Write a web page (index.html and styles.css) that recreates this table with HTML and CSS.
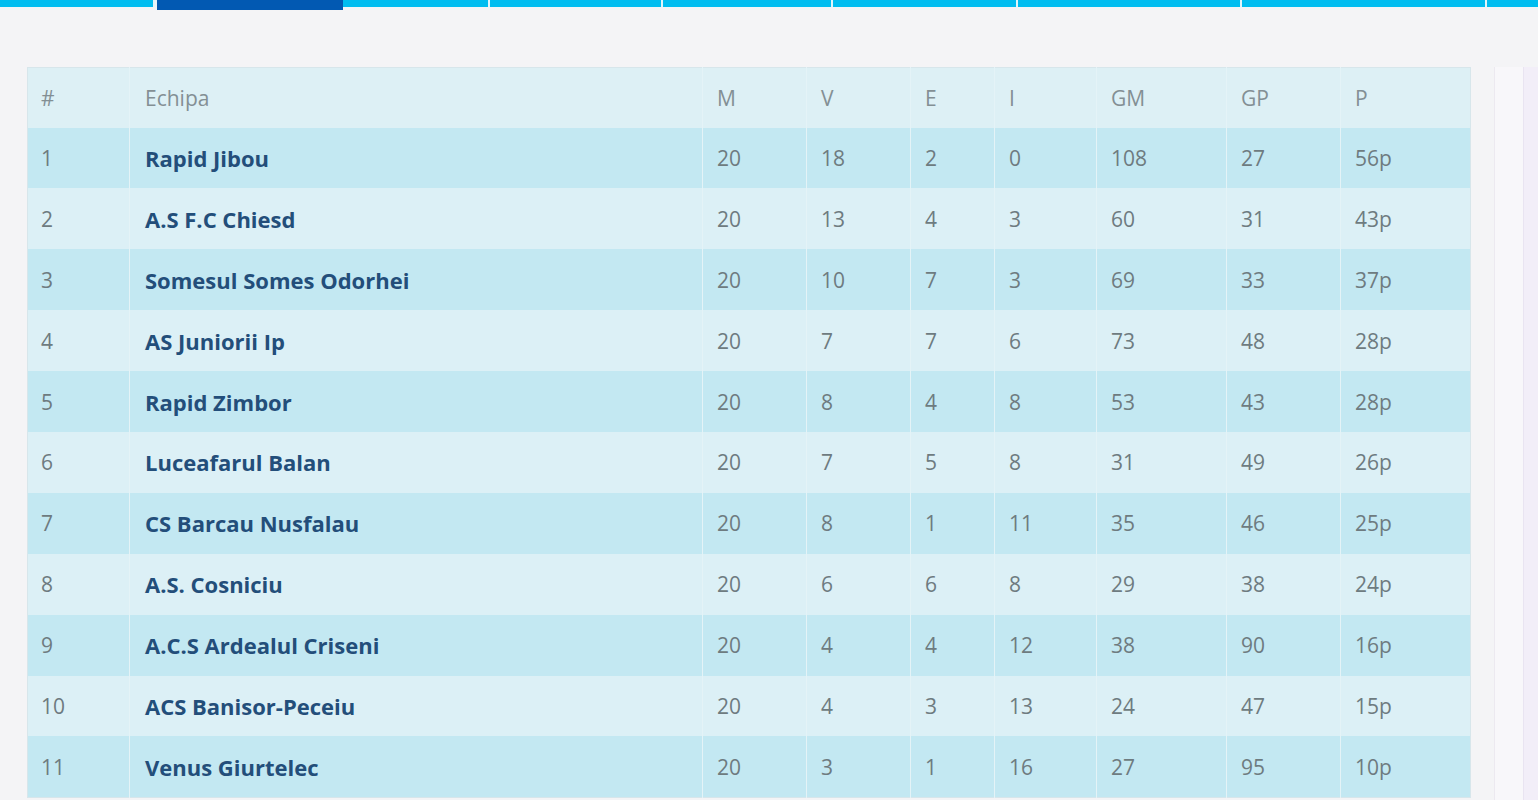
FILE: index.html
```html
<!DOCTYPE html>
<html lang="ro">
<head>
<meta charset="utf-8">
<title>Clasament</title>
<link rel="stylesheet" href="styles.css">
</head>
<body>
<nav class="topnav">
  <div class="tab w1"></div>
  <div class="tab active w2"></div>
  <div class="tab w3"></div>
  <div class="tab w4"></div>
  <div class="tab w5"></div>
  <div class="tab w6"></div>
  <div class="tab w7"></div>
  <div class="tab w8"></div>
  <div class="tab w9"></div>
</nav>
<main class="content">
  <table class="standings">
    <colgroup>
      <col class="c-pos"><col class="c-team"><col class="c-m"><col class="c-v"><col class="c-e"><col class="c-i"><col class="c-gm"><col class="c-gp"><col class="c-p">
    </colgroup>
    <thead>
      <tr><th>#</th><th>Echipa</th><th>M</th><th>V</th><th>E</th><th>I</th><th>GM</th><th>GP</th><th>P</th></tr>
    </thead>
    <tbody>
      <tr><td>1</td><td class="team">Rapid Jibou</td><td>20</td><td>18</td><td>2</td><td>0</td><td>108</td><td>27</td><td>56p</td></tr>
      <tr><td>2</td><td class="team">A.S F.C Chiesd</td><td>20</td><td>13</td><td>4</td><td>3</td><td>60</td><td>31</td><td>43p</td></tr>
      <tr><td>3</td><td class="team">Somesul Somes Odorhei</td><td>20</td><td>10</td><td>7</td><td>3</td><td>69</td><td>33</td><td>37p</td></tr>
      <tr><td>4</td><td class="team">AS Juniorii Ip</td><td>20</td><td>7</td><td>7</td><td>6</td><td>73</td><td>48</td><td>28p</td></tr>
      <tr><td>5</td><td class="team">Rapid Zimbor</td><td>20</td><td>8</td><td>4</td><td>8</td><td>53</td><td>43</td><td>28p</td></tr>
      <tr><td>6</td><td class="team">Luceafarul Balan</td><td>20</td><td>7</td><td>5</td><td>8</td><td>31</td><td>49</td><td>26p</td></tr>
      <tr><td>7</td><td class="team">CS Barcau Nusfalau</td><td>20</td><td>8</td><td>1</td><td>11</td><td>35</td><td>46</td><td>25p</td></tr>
      <tr><td>8</td><td class="team">A.S. Cosniciu</td><td>20</td><td>6</td><td>6</td><td>8</td><td>29</td><td>38</td><td>24p</td></tr>
      <tr><td>9</td><td class="team">A.C.S Ardealul Criseni</td><td>20</td><td>4</td><td>4</td><td>12</td><td>38</td><td>90</td><td>16p</td></tr>
      <tr><td>10</td><td class="team">ACS Banisor-Peceiu</td><td>20</td><td>4</td><td>3</td><td>13</td><td>24</td><td>47</td><td>15p</td></tr>
      <tr><td>11</td><td class="team">Venus Giurtelec</td><td>20</td><td>3</td><td>1</td><td>16</td><td>27</td><td>95</td><td>10p</td></tr>
    </tbody>
  </table>
  <aside class="sidebar"><div class="sidebar-inner"></div></aside>
</main>
</body>
</html>
```
FILE: styles.css
```css
* { box-sizing: border-box; }
html, body { margin: 0; padding: 0; }
body {
  background: #f4f4f6;
  font-family: "Open Sans", "DejaVu Sans", sans-serif;
  height: 800px;
  overflow: hidden;
}
.topnav {
  display: flex;
  align-items: flex-start;
  height: 10px;
  background: linear-gradient(#e6f6fb, #f4f4f6);
}
.tab {
  height: 7px;
  background: #00bdf0;
  border-right: 2px solid #e2f5fb;
}
.tab.active {
  height: 10px;
  background: #0259b2;
  border-right-color: #0259b2;
  margin-left: 2px;
}
.w1 { width: 155px; }
.w2 { width: 186px; }
.w3 { width: 147px; }
.w4 { width: 173px; }
.w5 { width: 170px; }
.w6 { width: 185px; }
.w7 { width: 224px; }
.w8 { width: 245px; }
.w9 { flex: 1; border-right: none; }

.content {
  display: flex;
  align-items: flex-start;
  padding: 57px 0 0 27px;
  gap: 23px;
}
.standings {
  width: 1443px;
  flex: none;
  table-layout: fixed;
  border-collapse: collapse;
  border: 1px solid #d7e6eb;
  font-size: 21px;
  color: #6e7b80;
}
.c-pos { width: 102px; }
.c-team { width: 573px; }
.c-m { width: 104px; }
.c-v { width: 104px; }
.c-e { width: 84px; }
.c-i { width: 102px; }
.c-gm { width: 130px; }
.c-gp { width: 114px; }
.c-p { width: 130px; }
.standings th, .standings td {
  text-align: left;
  padding: 0 0 0 14px;
  border-left: 1px solid #e4f3f7;
  white-space: nowrap;
  vertical-align: middle;
}
.standings th:first-child, .standings td:first-child { padding-left: 13px; border-left: none; }
.standings td:nth-child(2), .standings th:nth-child(2) { padding-left: 15px; }
.standings th {
  height: 60px;
  font-weight: 400;
  color: #838f94;
  background: #ddf0f5;
}
.standings td { height: 60.9px; }
.standings tbody tr:nth-child(odd) { background: #c3e8f2; }
.standings tbody tr:nth-child(even) { background: #dcf0f6; }
.standings td.team {
  font-weight: 700;
  color: #234e7a;
  font-size: 22px;
}
.sidebar {
  flex: 1;
  height: 760px;
  background: #f8f7fa;
  border-left: 1px solid #ece9f0;
  padding-left: 28px;
}
.sidebar-inner {
  height: 100%;
  background: #f2eef8;
  border-left: 1px solid #e9e4f1;
}
```
